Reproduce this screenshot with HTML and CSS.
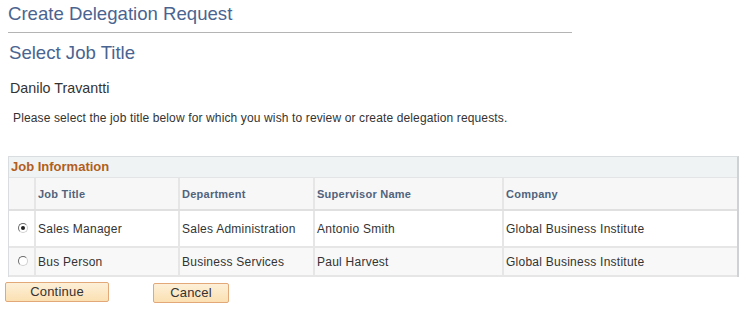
FILE: index.html
```html
<!DOCTYPE html>
<html lang="en">
<head>
  <meta charset="UTF-8">
  <title>Create Delegation Request</title>
  <link rel="stylesheet" href="styles.css">
</head>
<body>

<h1 class="page-title">Create Delegation Request</h1>

<h2 class="sub-title">Select Job Title</h2>

<div class="person">Danilo Travantti</div>

<p class="instructions">Please select the job title below for which you wish to review or create delegation requests.</p>

<div class="grid">
  <div class="grid-title">Job Information</div>
  <table class="grid-table">
    <colgroup>
      <col class="c-sel">
      <col class="c-job">
      <col class="c-dept">
      <col class="c-sup">
      <col class="c-comp">
    </colgroup>
    <thead>
      <tr>
        <th></th>
        <th>Job Title</th>
        <th>Department</th>
        <th>Supervisor Name</th>
        <th>Company</th>
      </tr>
    </thead>
    <tbody>
      <tr class="row-1">
        <td class="sel"><span class="radio checked"></span></td>
        <td>Sales Manager</td>
        <td>Sales Administration</td>
        <td>Antonio Smith</td>
        <td>Global Business Institute</td>
      </tr>
      <tr class="row-2">
        <td class="sel"><span class="radio"></span></td>
        <td>Bus Person</td>
        <td>Business Services</td>
        <td>Paul Harvest</td>
        <td>Global Business Institute</td>
      </tr>
    </tbody>
  </table>
</div>

<div class="actions">
  <button class="btn btn-continue">Continue</button>
  <button class="btn btn-cancel">Cancel</button>
</div>

</body>
</html>
```

FILE: styles.css
```css
body {
  margin: 0;
  padding: 0 0 0 8px;
  background: #ffffff;
  color: #333333;
  font-family: 'Liberation Sans', Arial, sans-serif;
}
.page-title {
  margin: 0;
  width: 564px;
  padding: 4px 0 8px 0;
  font-size: 18.6px;
  font-weight: normal;
  line-height: 20px;
  color: #4a6491;
  border-bottom: 1px solid #b4b4b4;
}
.sub-title {
  margin: 0;
  padding: 10px 0 0 1px;
  font-size: 18.6px;
  font-weight: normal;
  line-height: 20px;
  color: #4a6491;
}
.person {
  padding: 17px 0 0 2px;
  font-size: 14.3px;
  line-height: 16px;
  color: #333333;
}
.instructions {
  margin: 0;
  padding: 15px 0 0 5px;
  font-size: 12px;
  line-height: 14px;
  letter-spacing: 0.13px;
  color: #333333;
}
.grid {
  margin-top: 31px;
  width: 728px;
  border: 1px solid #d9dde0;
  border-right: 2px solid #cfd2d5;
  border-bottom: none;
}
.grid-title {
  background: #eff3f4;
  color: #b25e1c;
  font-size: 13px;
  font-weight: bold;
  line-height: 14px;
  padding: 3px 0 3px 2px;
  border-bottom: 1px solid #e2e4e6;
}
.grid-table {
  width: 100%;
  border-collapse: collapse;
  table-layout: fixed;
  font-size: 12px;
  letter-spacing: 0.25px;
}
.c-sel { width: 26px; }
.c-job { width: 144px; }
.c-dept { width: 135px; }
.c-sup { width: 189px; }
.grid-table th {
  background: #f7f7f7;
  color: #51637d;
  font-size: 11px;
  font-weight: bold;
  text-align: left;
  height: 31px;
  padding: 0 0 0 2px;
  border-left: 2px solid #e6e6e6;
  border-bottom: 2px solid #e0e0e0;
}
.grid-table th:first-child,
.grid-table td:first-child {
  border-left: none;
}
.grid-table td {
  padding: 0 0 0 2px;
  color: #333333;
  border-left: 2px solid #e6e6e6;
  border-bottom: 2px solid #e6e6e6;
  white-space: nowrap;
}
.row-1 td {
  background: #ffffff;
  height: 35px;
}
.row-2 td {
  background: #f8f8f8;
  height: 27px;
}
.sel {
  text-align: center;
}
.radio {
  display: inline-block;
  width: 8px;
  height: 8px;
  border-radius: 50%;
  border: 1px solid #6b6b6b;
  border-right-color: #d0d0d0;
  border-bottom-color: #d0d0d0;
  background: #ffffff;
  position: relative;
  vertical-align: middle;
  margin-top: -2px;
}
.radio.checked::after {
  content: "";
  position: absolute;
  left: 2px;
  top: 2px;
  width: 4px;
  height: 4px;
  border-radius: 50%;
  background: #222222;
}
.actions {
  display: flex;
  padding-top: 5px;
  margin-left: -3px;
}
.btn {
  font-family: 'Liberation Sans', Arial, sans-serif;
  font-size: 13px;
  letter-spacing: 0.2px;
  color: #333333;
  height: 20px;
  padding: 0;
  line-height: 18px;
  border: 1px solid #e2a878;
  border-radius: 2px;
  background: linear-gradient(#fdf0d8, #fbe0b2);
  cursor: pointer;
}
.btn-continue {
  width: 104px;
}
.btn-cancel {
  width: 76px;
  margin-left: 44px;
  margin-top: 1px;
}
```
